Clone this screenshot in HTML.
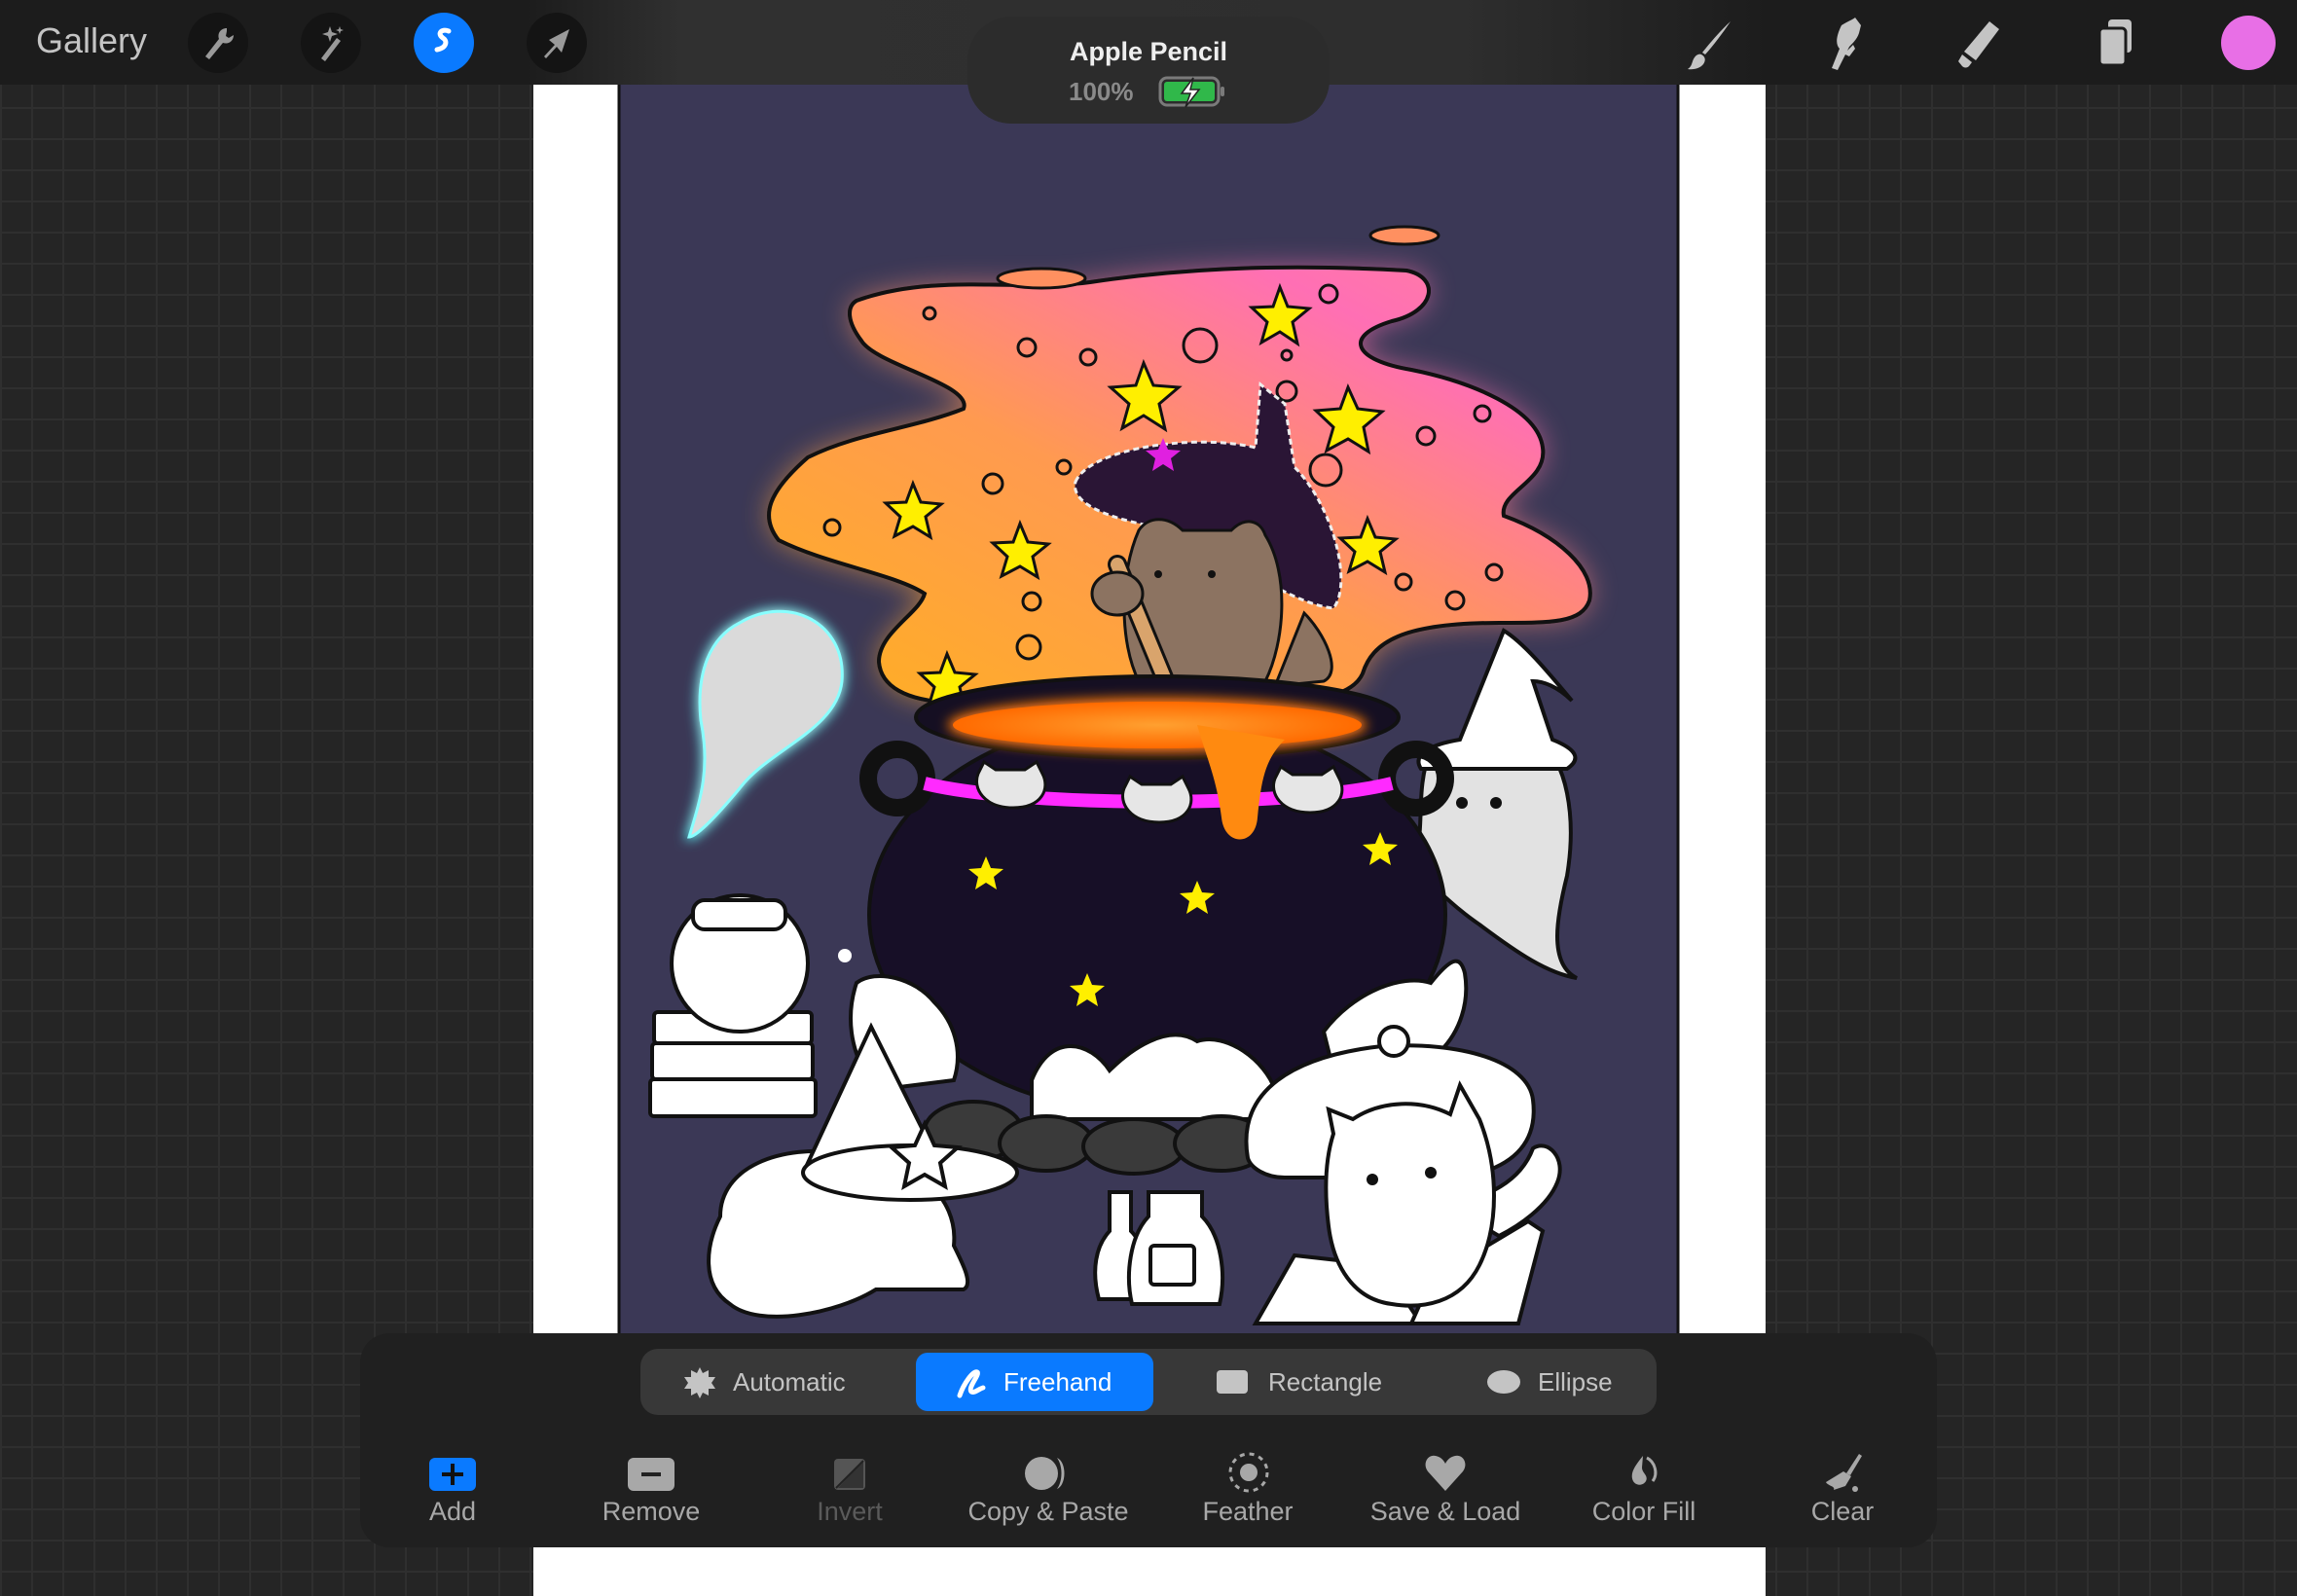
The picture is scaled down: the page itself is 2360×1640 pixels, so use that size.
<!DOCTYPE html>
<html><head><meta charset="utf-8"><style>
*{margin:0;padding:0;box-sizing:border-box}
body{width:2360px;height:1640px;overflow:hidden;position:relative;font-family:"Liberation Sans",sans-serif;
background-color:#252525;
background-image:linear-gradient(#2f2f2f 2px,transparent 2px),linear-gradient(90deg,#2f2f2f 2px,transparent 2px);
background-size:32px 32px;background-position:0 14px}
.abs{position:absolute}
#top{left:0;top:0;width:2360px;height:87px;background:linear-gradient(90deg,#1c1c1c 0,#1c1c1c 540px,#303030 700px,#2e2e2e 1500px,#1c1c1c 1820px,#1c1c1c 100%)}
.circ{position:absolute;top:13px;width:62px;height:62px;border-radius:50%;background:#141414}
.lbl{position:absolute;color:#a8a8a8;font-size:27px;transform:translateX(-50%);white-space:nowrap;top:1538px}
.seg{position:absolute;top:1386px;color:#c4c4c4;font-size:26px;line-height:68px}
</style></head><body>
<div class="abs" style="left:548px;top:87px;width:1266px;height:1553px;background:#fff"></div>
<svg class="abs" style="left:0;top:0" width="2360" height="1640" viewBox="0 0 2360 1640">
<defs>
<filter id="glow" x="-20%" y="-20%" width="140%" height="140%"><feGaussianBlur stdDeviation="14"/></filter>
<filter id="g2" x="-30%" y="-30%" width="160%" height="160%"><feGaussianBlur stdDeviation="6"/></filter>
<linearGradient id="cl" x1="0" y1="1" x2="1" y2="0"><stop offset="0" stop-color="#ffb020"/><stop offset="0.45" stop-color="#ff9a50"/><stop offset="0.8" stop-color="#ff6fb4"/><stop offset="1" stop-color="#ff80a0"/></linearGradient>
<radialGradient id="liq"><stop offset="0" stop-color="#ffa030"/><stop offset="1" stop-color="#ff6a00"/></radialGradient>
</defs>
<rect x="636" y="87" width="1088" height="1283" fill="#3b3856"/>
<line x1="636" y1="87" x2="636" y2="1370" stroke="#111" stroke-width="3"/>
<line x1="1724" y1="87" x2="1724" y2="1370" stroke="#111" stroke-width="3"/>
<g stroke="#111" stroke-width="4">
<path id="cloud" d="M880,309 C960,280 1050,300 1120,290 C1200,278 1300,270 1445,278 C1480,285 1475,320 1430,330 C1380,345 1390,370 1450,380 C1510,392 1580,420 1585,460 C1590,495 1540,505 1545,530 C1600,550 1640,585 1633,617 C1625,640 1595,640 1540,640 C1440,640 1410,660 1400,692 C1390,715 1350,722 1300,722 L978,722 C930,720 905,705 903,680 C903,650 945,630 950,610 C920,590 850,580 800,555 C780,530 790,505 830,470 C880,445 940,440 990,420 C1000,395 900,375 885,350 C870,330 870,315 880,309Z" fill="url(#cl)"/>
</g>
<use href="#cloud" filter="url(#glow)" opacity="0.6"/>
<path d="M880,309 C960,280 1050,300 1120,290 C1200,278 1300,270 1445,278 C1480,285 1475,320 1430,330 C1380,345 1390,370 1450,380 C1510,392 1580,420 1585,460 C1590,495 1540,505 1545,530 C1600,550 1640,585 1633,617 C1625,640 1595,640 1540,640 C1440,640 1410,660 1400,692 C1390,715 1350,722 1300,722 L978,722 C930,720 905,705 903,680 C903,650 945,630 950,610 C920,590 850,580 800,555 C780,530 790,505 830,470 C880,445 940,440 990,420 C1000,395 900,375 885,350 C870,330 870,315 880,309Z" fill="url(#cl)" stroke="#111" stroke-width="4"/>
<ellipse cx="1070" cy="286" rx="45" ry="10" fill="#ff9060" stroke="#111" stroke-width="3"/>
<ellipse cx="1443" cy="242" rx="35" ry="9" fill="#ff9060" stroke="#111" stroke-width="3"/>
<g fill="none" stroke="#111" stroke-width="3">
<circle cx="1233" cy="355" r="17"/><circle cx="1362" cy="483" r="16"/><circle cx="1055" cy="357" r="9"/><circle cx="1118" cy="367" r="8"/><circle cx="1020" cy="497" r="10"/><circle cx="1322" cy="402" r="10"/><circle cx="1465" cy="448" r="9"/><circle cx="1523" cy="425" r="8"/><circle cx="1535" cy="588" r="8"/><circle cx="1495" cy="617" r="9"/><circle cx="1442" cy="598" r="8"/><circle cx="1060" cy="618" r="9"/><circle cx="855" cy="542" r="8"/><circle cx="1057" cy="665" r="12"/><circle cx="1093" cy="480" r="7"/><circle cx="955" cy="322" r="6"/><circle cx="1365" cy="302" r="9"/><circle cx="1322" cy="365" r="5"/>
</g>
<g fill="#ffef00" stroke="#111" stroke-width="3">
<path d="M1315,295 l8,20 22,2 -17,14 5,22 -18,-12 -19,11 6,-21 -16,-15 22,-1z"/>
<path d="M1175,373 l10,23 26,2 -20,17 6,26 -22,-14 -22,13 7,-25 -19,-17 26,-2z"/>
<path d="M1385,398 l10,22 25,3 -19,16 5,25 -21,-13 -22,12 7,-24 -18,-17 25,-2z"/>
<path d="M938,497 l8,19 21,2 -16,13 5,21 -18,-11 -19,10 6,-20 -15,-14 21,-1z"/>
<path d="M1048,538 l8,19 21,2 -16,13 5,21 -18,-11 -19,10 6,-20 -15,-14 21,-1z"/>
<path d="M1405,533 l8,19 21,2 -16,13 5,21 -18,-11 -19,10 6,-20 -15,-14 21,-1z"/>
<path d="M973,672 l8,19 21,2 -16,13 5,21 -18,-11 -19,10 6,-20 -15,-14 21,-1z"/>
</g>
<!-- witch hat and cat -->
<path d="M1105,495 C1120,460 1230,445 1290,460 L1295,395 L1320,415 L1330,480 C1370,520 1390,600 1370,625 C1320,620 1250,560 1180,540 C1130,530 1100,515 1105,495Z" fill="#2a1535" stroke="#eee" stroke-width="3" stroke-dasharray="6 4"/>
<path d="M1195,450 l5,12 13,1 -10,8 3,13 -11,-7 -11,7 3,-13 -10,-8 13,-1z" fill="#e020e0"/>
<path d="M1170,545 C1180,530 1200,530 1215,545 L1265,545 C1280,530 1295,535 1300,550 C1325,590 1320,660 1300,700 L1170,700 C1150,660 1150,590 1170,545Z" fill="#8c7361" stroke="#111" stroke-width="3"/>
<path d="M1340,630 C1360,650 1380,690 1360,700 L1310,705 Z" fill="#8c7361" stroke="#111" stroke-width="3"/>
<line x1="1148" y1="580" x2="1212" y2="735" stroke="#111" stroke-width="20" stroke-linecap="round"/>
<line x1="1148" y1="580" x2="1212" y2="735" stroke="#d9a46c" stroke-width="14" stroke-linecap="round"/>
<ellipse cx="1148" cy="610" rx="26" ry="22" fill="#8c7361" stroke="#111" stroke-width="3"/>
<circle cx="1190" cy="590" r="4" fill="#111"/><circle cx="1245" cy="590" r="4" fill="#111"/>
<!-- right ghost -->
<path d="M1470,770 C1450,820 1470,870 1445,890 C1470,905 1490,930 1520,950 C1560,980 1590,1000 1620,1005 C1590,990 1600,940 1610,900 C1620,840 1610,780 1580,760 Z" fill="#e2e2e2" stroke="#111" stroke-width="4"/>
<path d="M1545,648 C1565,660 1590,690 1615,720 C1600,705 1585,700 1575,700 L1595,760 C1620,770 1625,780 1610,790 L1460,790 C1450,775 1470,765 1500,760 Z" fill="#fff" stroke="#111" stroke-width="4"/>
<circle cx="1502" cy="825" r="6" fill="#111"/><circle cx="1537" cy="825" r="6" fill="#111"/>
<!-- cauldron -->
<ellipse cx="1189" cy="940" rx="296" ry="205" fill="#170f27" stroke="#111" stroke-width="4"/>
<circle cx="922" cy="800" r="30" fill="none" stroke="#111" stroke-width="18"/>
<circle cx="1455" cy="800" r="30" fill="none" stroke="#111" stroke-width="18"/>
<path d="M950,805 C1050,830 1330,830 1430,805" fill="none" stroke="#ff2aff" stroke-width="14"/>
<ellipse cx="1189" cy="737" rx="248" ry="42" fill="#150f22" stroke="#111" stroke-width="4"/>
<ellipse cx="1189" cy="745" rx="215" ry="28" fill="#ff7a10" filter="url(#g2)"/>
<ellipse cx="1189" cy="745" rx="210" ry="24" fill="url(#liq)"/>
<path d="M1230,745 C1240,780 1250,800 1255,840 C1258,870 1290,870 1292,840 C1296,800 1300,780 1320,760 Z" fill="#ff8a10"/>
<g fill="#e6e6e6" stroke="#111" stroke-width="3">
<path d="M1005,795 l6,-12 12,8 h30 l12,-8 6,12 c8,15 0,35 -30,35 c-30,0 -42,-20 -36,-35z"/>
<path d="M1155,810 l6,-12 12,8 h30 l12,-8 6,12 c8,15 0,35 -30,35 c-30,0 -42,-20 -36,-35z"/>
<path d="M1310,800 l6,-12 12,8 h30 l12,-8 6,12 c8,15 0,35 -30,35 c-30,0 -42,-20 -36,-35z"/>
</g>
<g fill="#ffef00"><path d="M1013,880 l5,12 13,1 -10,8 3,13 -11,-7 -11,7 3,-13 -10,-8 13,-1z"/><path d="M1230,905 l5,12 13,1 -10,8 3,13 -11,-7 -11,7 3,-13 -10,-8 13,-1z"/><path d="M1418,855 l5,12 13,1 -10,8 3,13 -11,-7 -11,7 3,-13 -10,-8 13,-1z"/><path d="M1117,1000 l5,12 13,1 -10,8 3,13 -11,-7 -11,7 3,-13 -10,-8 13,-1z"/></g>
<!-- left ghost -->
<path d="M760,640 C810,610 870,640 865,700 C860,750 790,770 760,810 C735,840 715,860 708,860 C720,820 730,790 720,740 C715,690 730,655 760,640Z" fill="#dadada" stroke="#5ff" stroke-width="6" filter="url(#g2)"/>
<path d="M760,640 C810,610 870,640 865,700 C860,750 790,770 760,810 C735,840 715,860 708,860 C720,820 730,790 720,740 C715,690 730,655 760,640Z" fill="#dadada" stroke="#8ff" stroke-width="3"/>
<!-- white rocks -->
<g fill="#fff" stroke="#111" stroke-width="4">
<path d="M880,1010 C900,995 940,1005 960,1030 C980,1050 990,1080 980,1110 L900,1120 C870,1080 870,1040 880,1010Z"/>
<path d="M1060,1110 C1080,1060 1120,1070 1140,1100 C1160,1080 1200,1050 1230,1070 C1260,1060 1300,1090 1310,1120 L1300,1150 L1060,1150Z"/>
<path d="M1360,1060 C1390,1020 1440,1000 1470,1010 C1490,985 1500,980 1505,1000 C1510,1030 1500,1060 1480,1080 L1370,1100Z"/>
</g>
<g fill="#3a3a3a" stroke="#111" stroke-width="4">
<ellipse cx="1000" cy="1162" rx="50" ry="30"/><ellipse cx="1075" cy="1175" rx="48" ry="28"/><ellipse cx="1165" cy="1178" rx="52" ry="28"/><ellipse cx="1255" cy="1175" rx="48" ry="28"/>
</g>
<!-- fishbowl and books -->
<g fill="#fff" stroke="#111" stroke-width="4">
<rect x="672" y="1040" width="162" height="32" rx="4"/><rect x="670" y="1072" width="165" height="37" rx="4"/><rect x="668" y="1109" width="170" height="38" rx="4"/>
<circle cx="760" cy="990" r="70"/><rect x="712" y="925" width="95" height="30" rx="12"/>
</g>
<circle cx="868" cy="982" r="7" fill="#fff"/>
<!-- left cat -->
<g fill="#fff" stroke="#111" stroke-width="4">
<path d="M740,1250 C740,1200 800,1175 870,1185 C940,1190 985,1230 980,1280 C990,1300 1000,1320 990,1325 L900,1325 C860,1350 780,1365 750,1340 C720,1320 725,1280 740,1250Z"/>
<path d="M895,1055 L830,1195 L965,1195Z"/>
<ellipse cx="935" cy="1205" rx="110" ry="28"/>
<path d="M950,1155 l10,22 24,2 -18,16 5,24 -21,-12 -21,12 5,-24 -18,-16 24,-2z"/>
</g>
<!-- bottles -->
<g fill="#fff" stroke="#111" stroke-width="4">
<path d="M1140,1225 h22 v40 c15,15 20,40 12,70 h-45 c-8,-30 -3,-55 11,-70z"/>
<path d="M1180,1225 h55 v25 c20,20 25,60 18,90 h-90 c-7,-30 -2,-70 17,-90z"/>
<rect x="1182" y="1280" width="45" height="40" rx="4"/>
</g>
<!-- right cat -->
<g fill="#fff" stroke="#111" stroke-width="4">
<path d="M1290,1360 L1330,1290 L1420,1300 L1460,1360 Z"/>
<path d="M1470,1315 L1570,1255 L1585,1265 L1560,1360 L1450,1360Z"/>
<path d="M1282,1190 C1270,1120 1330,1085 1420,1075 C1500,1070 1570,1090 1575,1130 C1580,1170 1560,1200 1500,1210 L1320,1210 C1300,1210 1285,1200 1282,1190Z"/>
<path d="M1490,1240 C1520,1230 1560,1220 1575,1180 C1590,1170 1610,1190 1600,1215 C1590,1240 1560,1260 1540,1270Z"/>
<path d="M1370,1165 L1365,1140 L1390,1150 C1420,1130 1460,1130 1490,1145 L1500,1115 L1520,1150 C1540,1200 1540,1260 1520,1300 C1500,1340 1460,1345 1430,1340 C1390,1335 1370,1300 1365,1260 C1360,1220 1362,1190 1370,1165Z"/>
<circle cx="1432" cy="1070" r="15"/>
</g>
<circle cx="1410" cy="1212" r="6" fill="#111"/><circle cx="1470" cy="1205" r="6" fill="#111"/>
</svg>

<div id="top" class="abs"></div>
<div class="abs" style="left:37px;top:21px;font-size:36px;color:#c4c4c4">Gallery</div>
<div class="circ" style="left:193px"><svg width="62" height="62" viewBox="0 0 62 62"><path d="M40,16 c-6,0 -10,5 -8,11 l-14,18 4,3 14,-17 c6,2 11,-2 11,-8 l-5,3 -3,-2 1,-5z" fill="#9a9a9a"/></svg></div>
<div class="circ" style="left:309px"><svg width="62" height="62" viewBox="0 0 62 62"><path d="M37,26 l4,3 -16,21 -4,-3z" fill="#9a9a9a"/><path d="M30,14 l2,6 6,2 -6,2 -2,6 -2,-6 -6,-2 6,-2z M40,14 l1,3 3,1 -3,1 -1,3 -1,-3 -3,-1 3,-1z" fill="#9a9a9a"/></svg></div>
<div class="circ" style="left:425px;background:#0a7aff"><svg width="62" height="62" viewBox="0 0 62 62"><path d="M36,19 c-8,-3 -12,3 -6,7 c5,3 4,10 -6,12" fill="none" stroke="#fff" stroke-width="5" stroke-linecap="round"/></svg></div>
<div class="circ" style="left:541px"><svg width="62" height="62" viewBox="0 0 62 62"><path d="M44,17 l-8,24 -5,-6 -11,12 -2,-2 11,-12 -6,-5z" fill="#9a9a9a"/></svg></div>

<div class="abs" style="left:994px;top:17px;width:372px;height:110px;border-radius:45px;background:#2c2c2c"></div>
<div class="abs" style="left:994px;top:38px;width:372px;text-align:center;color:#eee;font-size:27px;font-weight:bold">Apple Pencil</div>
<div class="abs" style="left:1098px;top:79px;color:#8a8a8a;font-size:26px;font-weight:bold">100%</div>
<svg class="abs" style="left:1190px;top:78px" width="70" height="34" viewBox="0 0 70 34"><rect x="2" y="2" width="60" height="28" rx="7" fill="none" stroke="#7a7a7a" stroke-width="3"/><rect x="6" y="6" width="52" height="20" rx="3" fill="#30b84a"/><rect x="64" y="11" width="4" height="10" rx="2" fill="#7a7a7a"/><path d="M36,2 l-12,16 h9 l-5,14 14,-18 h-9z" fill="#fff" stroke="#222" stroke-width="1.5"/></svg>

<svg class="abs" style="left:1720px;top:14px" width="70" height="60" viewBox="0 0 70 60"><path d="M58,8 c-8,12 -18,25 -26,34 l-3,-2 c8,-10 20,-24 29,-32z M28,42 c4,2 5,6 2,10 c-3,4 -10,6 -16,5 c5,-3 4,-8 7,-12 c2,-3 5,-4 7,-3z" fill="#c4c4c4"/></svg>
<svg class="abs" style="left:1860px;top:14px" width="70" height="60" viewBox="0 0 70 60"><path d="M32,12 c6,-4 12,-6 14,-8 l6,8 -2,8 c-2,6 -6,10 -10,14 l-12,24 -6,-2 8,-20 c-4,-4 -4,-12 2,-24z M38,38 l6,-6 2,4 -6,8 -4,-2z" fill="#c4c4c4"/></svg>
<svg class="abs" style="left:2000px;top:14px" width="70" height="60" viewBox="0 0 70 60"><path d="M44,8 l10,8 -24,32 -12,-9z" fill="#c4c4c4"/><path d="M16,42 l10,8 -3,4 c-2,2 -5,2 -7,0 l-4,-5z" fill="#c4c4c4"/></svg>
<svg class="abs" style="left:2140px;top:14px" width="70" height="60" viewBox="0 0 70 60"><rect x="26" y="6" width="24" height="34" rx="4" fill="#c4c4c4"/><rect x="17" y="15" width="27" height="38" rx="4" fill="#c4c4c4" stroke="#1c1c1c" stroke-width="3"/></svg>
<div class="abs" style="left:2282px;top:16px;width:56px;height:56px;border-radius:50%;background:#e86fe6"></div>

<!-- bottom panel -->
<div class="abs" style="left:370px;top:1370px;width:1620px;height:220px;border-radius:30px;background:#202020"></div>
<div class="abs" style="left:658px;top:1386px;width:1044px;height:68px;border-radius:18px;background:#383838"></div>
<div class="abs" style="left:941px;top:1390px;width:244px;height:60px;border-radius:12px;background:#0a7aff"></div>
<svg class="abs" style="left:702px;top:1404px" width="34" height="34" viewBox="0 0 34 34"><path d="M17,1 l3,6 6,-3 0,7 7,0 -4,6 4,6 -7,0 0,7 -6,-3 -3,6 -3,-6 -6,3 0,-7 -7,0 4,-6 -4,-6 7,0 0,-7 6,3z" fill="#c4c4c4"/></svg>
<div class="seg" style="left:753px">Automatic</div>
<svg class="abs" style="left:980px;top:1402px" width="36" height="36" viewBox="0 0 36 36"><path d="M6,32 c4,-12 14,-26 18,-24 c3,2 -10,16 -6,20 c3,2 8,-3 12,-4" fill="none" stroke="#fff" stroke-width="5" stroke-linecap="round"/></svg>
<div class="seg" style="left:1031px;color:#fff">Freehand</div>
<div class="abs" style="left:1250px;top:1408px;width:32px;height:24px;border-radius:4px;background:#c4c4c4"></div>
<div class="seg" style="left:1303px">Rectangle</div>
<div class="abs" style="left:1528px;top:1408px;width:34px;height:24px;border-radius:50%;background:#c4c4c4"></div>
<div class="seg" style="left:1580px">Ellipse</div>

<div class="abs" style="left:441px;top:1498px;width:48px;height:34px;border-radius:6px;background:#0a7aff"><div style="position:absolute;left:22px;top:6px;width:4px;height:22px;background:#111"></div><div style="position:absolute;left:13px;top:15px;width:22px;height:4px;background:#111"></div></div>
<div class="abs" style="left:645px;top:1498px;width:48px;height:34px;border-radius:6px;background:#a8a8a8"><div style="position:absolute;left:14px;top:15px;width:20px;height:4px;background:#222"></div></div>
<svg class="abs" style="left:855px;top:1497px" width="36" height="36" viewBox="0 0 36 36"><rect x="2" y="2" width="32" height="32" rx="4" fill="#555"/><path d="M6,32 L32,4 V32Z" fill="#333"/><path d="M4,32 L32,4" stroke="#222" stroke-width="2"/></svg>
<svg class="abs" style="left:1050px;top:1495px" width="56" height="38" viewBox="0 0 56 38"><ellipse cx="20" cy="19" rx="17" ry="17" fill="#a8a8a8"/><path d="M36,3 c10,4 10,28 0,32 c6,-8 6,-24 0,-32z" fill="#a8a8a8"/></svg>
<svg class="abs" style="left:1260px;top:1490px" width="46" height="46" viewBox="0 0 46 46"><circle cx="23" cy="23" r="19" fill="none" stroke="#a8a8a8" stroke-width="3" stroke-dasharray="5 5"/><circle cx="23" cy="23" r="9" fill="#a8a8a8"/></svg>
<svg class="abs" style="left:1463px;top:1494px" width="44" height="40" viewBox="0 0 44 40"><path d="M22,38 L4,18 C-2,10 4,0 12,2 C17,3 20,6 22,10 C24,6 27,3 32,2 C40,0 46,10 40,18Z" fill="#a8a8a8"/></svg>
<svg class="abs" style="left:1672px;top:1494px" width="36" height="40" viewBox="0 0 36 40"><path d="M16,2 c-8,10 -14,18 -10,26 c3,5 10,5 13,0 c3,-6 -4,-8 -4,-14 z" fill="#a8a8a8"/><path d="M20,4 c8,4 12,16 6,24" fill="none" stroke="#a8a8a8" stroke-width="3"/></svg>
<svg class="abs" style="left:1872px;top:1492px" width="44" height="44" viewBox="0 0 44 44"><path d="M38,2 l3,2 -12,20 -4,-2z" fill="#a8a8a8"/><path d="M22,20 l8,5 -6,10 -12,4 c2,-4 -6,-4 -8,-8 z" fill="#a8a8a8"/><circle cx="34" cy="38" r="3" fill="#a8a8a8"/></svg>

<div class="lbl" style="left:465px">Add</div>
<div class="lbl" style="left:669px">Remove</div>
<div class="lbl" style="left:873px;color:#5a5a5a">Invert</div>
<div class="lbl" style="left:1077px">Copy &amp; Paste</div>
<div class="lbl" style="left:1282px">Feather</div>
<div class="lbl" style="left:1485px">Save &amp; Load</div>
<div class="lbl" style="left:1689px">Color Fill</div>
<div class="lbl" style="left:1893px">Clear</div>
</body></html>
